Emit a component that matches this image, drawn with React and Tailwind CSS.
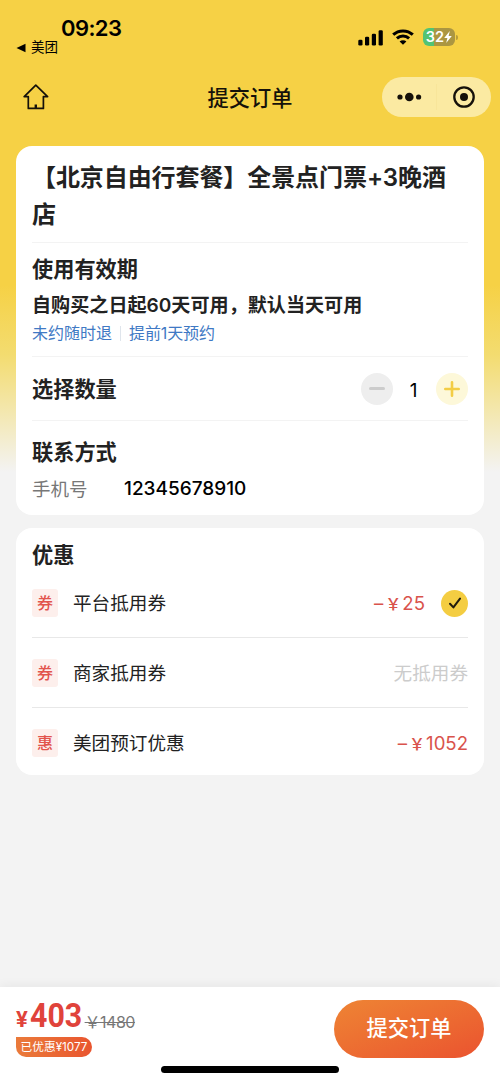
/**
 * Order submit page
 */

const discounts = [
  { tag: '券', name: '平台抵用券', amount: '25', checked: true },
  { tag: '券', name: '商家抵用券', amount: null, checked: false },
  { tag: '惠', name: '美团预订优惠', amount: '1052', checked: false },
];

function StatusBar() {
  return (
    <div className="flex h-[62px] justify-between text-black">
      <div className="pt-[15px]">
        <div className="pl-[61px] text-[22px] leading-[26px] font-semibold tracking-[-0.6px]">09:23</div>
        <div className="flex h-[13px] items-center gap-[5px] pl-4 text-[13.5px]">
          <svg className="h-[10px] w-[10px]" viewBox="0 0 10 10">
            <path d="M0.5 5L9.5 0.8V9.2Z" />
          </svg>
          美团
        </div>
      </div>
      <div className="mt-[28px] flex h-[18px] items-center gap-[9px] pr-[42px]">
        <svg className="h-[17px] w-[26px]" viewBox="0 0 26 17">
          <rect x="1.3" y="10.8" width="4.2" height="5.7" rx="1.3" />
          <rect x="8" y="7.8" width="4.2" height="8.7" rx="1.3" />
          <rect x="14.8" y="4.8" width="4.2" height="11.7" rx="1.3" />
          <rect x="21.6" y="1.3" width="4.2" height="15.2" rx="1.3" />
        </svg>
        <svg className="h-[16px] w-[22px]" viewBox="0 0 22 16" fill="none" stroke="currentColor" strokeWidth="3">
          <path d="M1.2 5.7C6.6 0.6 15.4 0.6 20.8 5.7" />
          <path d="M4.9 9.4C8.3 6.2 13.7 6.2 17.1 9.4" />
          <path d="M11 15.8L7.6 12.5C9.5 10.8 12.5 10.8 14.4 12.5Z" fill="currentColor" stroke="none" />
        </svg>
        <div className="flex items-center gap-px">
          <div className="flex h-[18px] w-[32px] items-center justify-center rounded-[6px] bg-[linear-gradient(90deg,#52c374_34%,#ab9641_34%)] text-[14.5px] font-semibold text-white">
            32
            <svg className="h-[12px] w-[8px]" viewBox="0 0 8 12" fill="currentColor">
              <path d="M5.8 0L0.2 6.9H3.4L2.2 12L7.8 5H4.6Z" />
            </svg>
          </div>
          <div className="h-[5px] w-[2px] rounded-r-full bg-[#b89e3b]" />
        </div>
      </div>
    </div>
  );
}

function NavBar() {
  return (
    <div className="mt-[15px] grid h-10 grid-cols-[1fr_auto_1fr] items-center text-[#15110a]">
      <svg className="ml-[23px] h-[26px] w-[26px]" viewBox="0 0 26 26" fill="none" stroke="currentColor" strokeWidth="1.7" strokeLinejoin="round" strokeLinecap="round">
        <path d="M12.8 1.2L1.2 12.6H5.3V24.4H20.4V12.6H24.6Z" />
        <path d="M12.8 20.5V24" strokeWidth="2.4" strokeLinecap="butt" />
      </svg>
      <h1 className="pt-px text-[21.2px] leading-[30px] font-medium">提交订单</h1>
      <div className="mr-[9px] flex h-10 w-[109px] items-center justify-self-end rounded-full bg-[#fbeaa2]">
        <div className="flex w-[54px] justify-center">
          <svg className="h-[10px] w-[25px]" viewBox="0 0 25 10" fill="currentColor">
            <circle cx="3" cy="5" r="2.6" />
            <circle cx="12.3" cy="5" r="4.3" />
            <circle cx="21.6" cy="5" r="2.6" />
          </svg>
        </div>
        <div className="h-[26px] w-px bg-[#f8e59a]" />
        <div className="flex flex-1 justify-center">
          <svg className="h-[22px] w-[22px]" viewBox="0 0 22 22">
            <circle cx="11" cy="11" r="9.7" fill="none" stroke="currentColor" strokeWidth="2.3" />
            <circle cx="11" cy="11" r="4" fill="currentColor" />
          </svg>
        </div>
      </div>
    </div>
  );
}

function OrderCard() {
  return (
    <section className="mx-4 mt-[29px] h-[369px] rounded-2xl bg-white px-4 pt-[13px] text-[#222]">
      <h2 className="h-[84px] border-b border-[#f3f3f3] text-[24px] leading-[37px] font-semibold tracking-[-0.08px]">
        【北京自由行套餐】全景点门票+3晚酒店
      </h2>

      {/* Validity */}
      <div className="h-[114px] border-b border-[#f3f3f3] pt-[10px]">
        <h3 className="text-[21.2px] leading-[32px] font-semibold">使用有效期</h3>
        <p className="mt-[5px] text-[19.1px] leading-[30px] font-semibold">自购买之日起60天可用，默认当天可用</p>
        <div className="flex items-center text-[16px] leading-[26px] text-[#4079c4]">
          <span>未约随时退</span>
          <span className="mx-2 h-[15px] w-px bg-[#dfe5ec]" />
          <span className="tracking-[-0.1px]">提前1天预约</span>
        </div>
      </div>

      {/* Quantity */}
      <div className="flex h-16 items-center justify-between border-b border-[#f3f3f3]">
        <h3 className="text-[21.2px] leading-[32px] font-semibold">选择数量</h3>
        <div className="flex items-center">
          <button className="flex h-8 w-8 items-center justify-center rounded-full bg-[#eeeeee]">
            <span className="h-[3px] w-4 rounded-full bg-[#cccccc]" />
          </button>
          <span className="w-[43px] pt-[6px] pr-[2px] text-center text-[19px] text-black">1</span>
          <button className="flex h-8 w-8 items-center justify-center rounded-full bg-[#fdf8d9]">
            <svg className="h-4 w-4" viewBox="0 0 16 16" stroke="#f3cd45" strokeWidth="2.6" strokeLinecap="round">
              <path d="M1.3 8H14.7M8 1.3V14.7" />
            </svg>
          </button>
        </div>
      </div>

      {/* Contact */}
      <div className="pt-[15px]">
        <h3 className="text-[21.2px] leading-[32px] font-semibold">联系方式</h3>
        <div className="mt-[6px] flex items-center leading-[30px]">
          <span className="w-[92px] text-[18.5px] text-[#777]">手机号</span>
          <span className="text-[19px] font-medium text-black">12345678910</span>
        </div>
      </div>
    </section>
  );
}

function DiscountCard() {
  return (
    <section className="mx-4 mt-[13px] h-[247px] rounded-2xl bg-white px-4 pt-[11px] text-[#222]">
      <h3 className="text-[21.2px] leading-[32px] font-semibold">优惠</h3>
      <div className="divide-y divide-[#e8e8e8]">
        {discounts.map((item) => (
          <div key={item.name} className="flex h-[70px] items-center text-[18.6px] first:h-[67px] first:pb-[2px]">
            <span className="flex h-7 w-[26px] items-center justify-center rounded-[3px] bg-[#fdefec] text-[16px] font-medium text-[#e2544c]">
              {item.tag}
            </span>
            <span className="ml-[15px] flex-1 pt-[2px]">{item.name}</span>
            {item.amount ? (
              <span className="flex items-center pt-[2px] text-[#d9534c]">
                <span>–</span>
                <span className="mr-px ml-[2px] text-[16px] font-medium">￥</span>
                <span>{item.amount}</span>
              </span>
            ) : (
              <span className="pt-[2px] text-[#cccccc]">无抵用券</span>
            )}
            {item.checked && (
              <span className="ml-4 flex h-[27px] w-[27px] items-center justify-center rounded-full bg-[#f4cd42]">
                <svg className="h-3 w-3" viewBox="0 0 12 12" fill="none" stroke="#211b0c" strokeWidth="2" strokeLinecap="round" strokeLinejoin="round">
                  <path d="M1 6.8L4.4 10.4L11 1.6" />
                </svg>
              </span>
            )}
          </div>
        ))}
      </div>
    </section>
  );
}

function SubmitBar() {
  return (
    <footer className="mt-auto flex h-24 flex-col items-center bg-white shadow-[0_-2px_10px_rgba(0,0,0,0.05)]">
      <div className="flex w-full justify-between pt-[13px] pr-4 pl-4">
        <div>
          <div className="flex h-[31px] items-baseline text-[#e0433b]">
            <span className="font-['Roboto'] text-[22px] leading-[32px] font-bold">¥</span>
            <span className="mr-[-5px] ml-[2px] origin-left scale-x-92 font-['Roboto'] text-[33px] leading-[32px] font-bold">403</span>
            <span className="ml-[3px] translate-y-px text-[16px] tracking-[-0.5px] text-[#777] line-through">￥1480</span>
          </div>
          <div className="mt-[6px] flex h-[20px] w-[76px] items-center justify-center rounded-full rounded-tl-none bg-linear-to-r from-[#ea7a3a] to-[#e9552f] pt-px text-[11.7px] whitespace-nowrap text-white">
            已优惠¥1077
          </div>
        </div>
        <button className="h-[58px] w-[150px] rounded-full bg-linear-to-br from-[#ee8434] to-[#ea522f] text-[21.2px] font-medium text-white">
          提交订单
        </button>
      </div>
      <div className="mt-[8px] h-[7px] w-[178px] rounded-full bg-black" />
    </footer>
  );
}

export default function App() {
  return (
    <div className="flex h-[1083px] w-[500px] flex-col overflow-hidden bg-[#f3f3f3] bg-[linear-gradient(180deg,#f6d145_0,#f6d145_285px,#f3dc70_355px,#f3e7ad_410px,#f3f3f3_472px)] font-['Inter','Noto_Sans_CJK_SC',sans-serif]">
      <StatusBar />
      <NavBar />
      <OrderCard />
      <DiscountCard />
      <SubmitBar />
    </div>
  );
}
